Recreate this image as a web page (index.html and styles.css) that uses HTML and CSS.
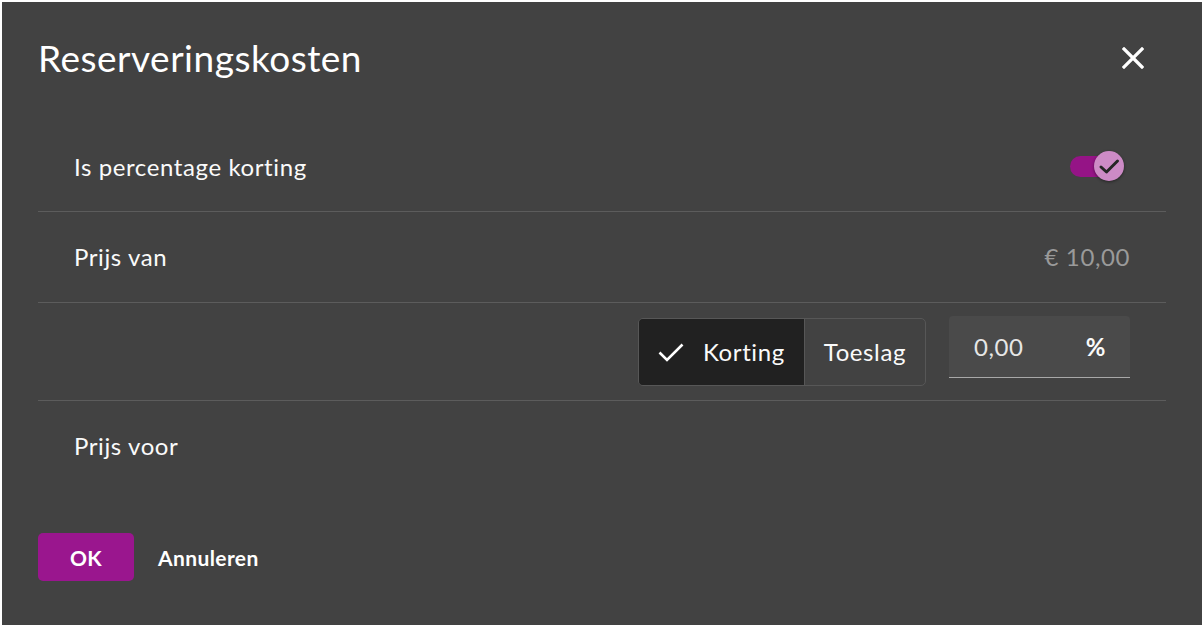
FILE: index.html
```html
<!DOCTYPE html>
<html lang="nl">
<head>
<meta charset="utf-8">
<title>Reserveringskosten</title>
<link rel="stylesheet" href="styles.css">
</head>
<body>
<div class="dialog">
  <header class="head">
    <h1 class="title">Reserveringskosten</h1>
    <button class="close" aria-label="Sluiten">
      <svg width="22" height="22" viewBox="0 0 22 22"><path d="M2 2 L20 20 M20 2 L2 20" stroke="#fff" stroke-width="3.2" stroke-linecap="square" fill="none"/></svg>
    </button>
  </header>
  <div class="rows">
    <div class="row r1">
      <span class="label">Is percentage korting</span>
      <span class="toggle">
        <span class="track"></span>
        <span class="knob">
          <svg width="22" height="22" viewBox="0 0 22 22"><path d="M3 12 L8.5 17 L19.5 6" stroke="#262626" stroke-width="3" fill="none" stroke-linecap="round" stroke-linejoin="round"/></svg>
        </span>
      </span>
    </div>
    <div class="row r2">
      <span class="label">Prijs van</span>
      <span class="price">€ 10,00</span>
    </div>
    <div class="row r3">
      <div class="seg">
        <span class="opt on">
          <svg width="26" height="20" viewBox="0 0 26 20"><path d="M1.5 10.5 L9 18 L24.5 2.5" stroke="#fff" stroke-width="2.6" fill="none"/></svg>
          Korting
        </span>
        <span class="opt">Toeslag</span>
      </div>
      <div class="field">
        <span class="val">0,00</span>
        <span class="unit">%</span>
      </div>
    </div>
    <div class="row r4">
      <span class="label">Prijs voor</span>
    </div>
  </div>
  <footer class="foot">
    <button class="btn ok">OK</button>
    <button class="btn cancel">Annuleren</button>
  </footer>
</div>
</body>
</html>
```
FILE: styles.css
```css
html, body {
  margin: 0;
  padding: 0;
  background: #ffffff;
}
body {
  padding: 2px;
  font-family: Lato, "Noto Sans", sans-serif;
  color: #fafafa;
}
.dialog {
  width: 1200px;
  height: 623px;
  background: #424242;
  box-sizing: border-box;
  display: flex;
  flex-direction: column;
}
.head {
  display: flex;
  align-items: center;
  justify-content: space-between;
  padding: 30px 45px 0 36px;
}
.title {
  margin: 0;
  font-size: 37px;
  letter-spacing: 0.5px;
  line-height: 52px;
  font-weight: 400;
  color: #ffffff;
}
.close {
  width: 48px;
  height: 48px;
  border: 0;
  background: transparent;
  padding: 0;
  display: flex;
  align-items: center;
  justify-content: center;
}
.rows {
  margin: 38px 36px 0;
}
.row {
  display: flex;
  align-items: center;
  justify-content: space-between;
  padding: 0 36px;
  border-bottom: 1px solid #5c5c5c;
}
.r1 { height: 88px; padding-bottom: 1px; }
.r2 { height: 89px; padding-bottom: 1px; }
.r3 { height: 97px; justify-content: flex-end; gap: 23px; }
.r4 { height: 88px; padding-bottom: 1px; border-bottom: 0; }
.label {
  font-size: 24px;
  letter-spacing: 0.6px;
  color: #fafafa;
}
.price {
  font-size: 24px;
  letter-spacing: 0.6px;
  color: #9a9a9a;
}
.toggle {
  position: relative;
  width: 54px;
  height: 30px;
  margin-right: 6px;
  display: flex;
  align-items: center;
}
.track {
  width: 46px;
  height: 21px;
  border-radius: 11px;
  background: #951486;
}
.knob {
  position: absolute;
  right: 0;
  top: 0;
  width: 30px;
  height: 30px;
  border-radius: 50%;
  background: #cd8bc6;
  box-shadow: 0 1px 3px rgba(0,0,0,0.45);
  display: flex;
  align-items: center;
  justify-content: center;
}
.seg {
  display: flex;
  height: 66px;
  border: 1px solid #575757;
  border-radius: 5px;
  overflow: hidden;
}
.opt {
  display: flex;
  align-items: center;
  gap: 19px;
  padding: 0 19px;
  font-size: 24px;
  letter-spacing: 0.6px;
  color: #fafafa;
}
.opt.on {
  background: #212121;
  border-right: 1px solid #575757;
}
.field {
  width: 181px;
  height: 62px;
  box-sizing: border-box;
  margin-bottom: 9px;
  background: #4a4a4a;
  border-bottom: 1px solid #a8a8a8;
  border-radius: 4px 4px 0 0;
  display: flex;
  align-items: center;
  justify-content: space-between;
  padding: 0 24px 0 25px;
  font-size: 24px;
  letter-spacing: 0.6px;
}
.val { color: #e6e6e6; }
.unit { font-weight: 700; color: #fafafa; }
.foot {
  display: flex;
  align-items: center;
  gap: 24px;
  padding: 43px 36px 0;
}
.btn {
  font-family: Lato, "Noto Sans", sans-serif;
  font-size: 21px;
  letter-spacing: 0.4px;
  font-weight: 700;
  color: #ffffff;
  border: 0;
  cursor: pointer;
}
.ok {
  width: 96px;
  height: 48px;
  border-radius: 5px;
  background: #9a168e;
}
.cancel {
  background: transparent;
  padding: 0;
}
```
